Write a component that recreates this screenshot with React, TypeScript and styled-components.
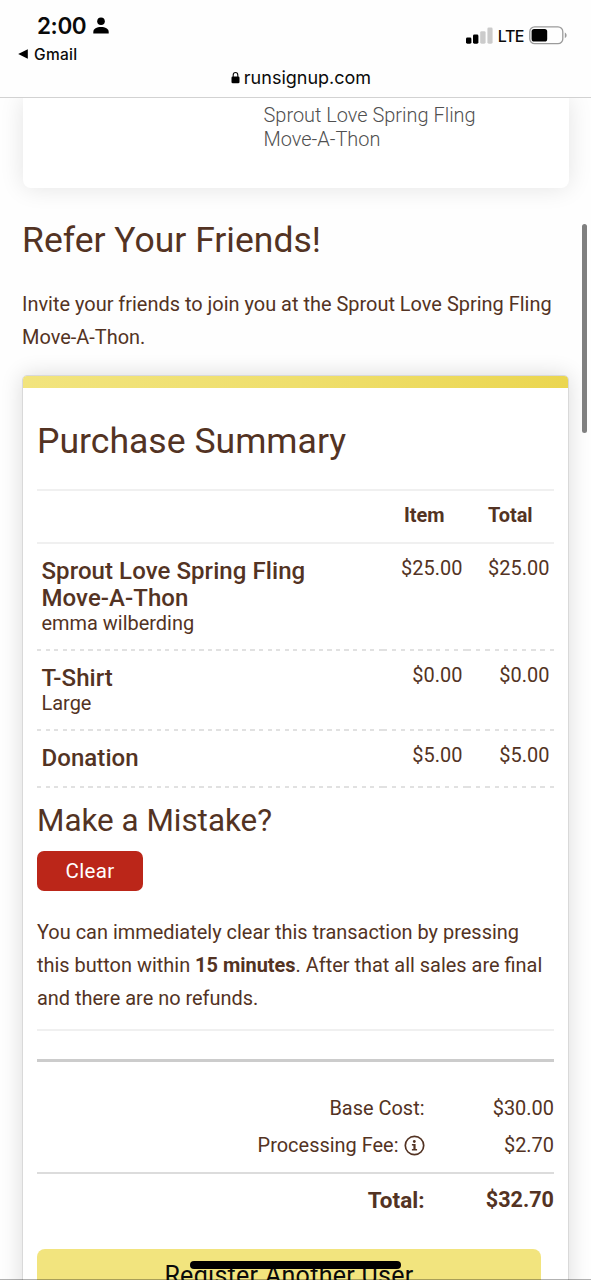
import React from "react";
import styled, { createGlobalStyle } from "styled-components";

const GlobalStyle = createGlobalStyle`
  * { box-sizing: border-box; }
  html, body { margin: 0; padding: 0; background: #fefefe; }
  h1, h2, h3, h4, p { margin: 0; font-weight: 400; }
`;

const Screen = styled.div`
  position: relative;
  width: 591px;
  height: 1280px;
  overflow: hidden;
  background: #fefefe;
  color: #533323;
  font-family: Roboto, sans-serif;
  font-size: 19.95px;
`;

const Header = styled.header`
  position: relative;
  z-index: 1;
  height: 98px;
  border-bottom: 1px solid #d2d2d2;
  background: #fefefe;
  color: #0a0a0a;
  font-family: Inter, sans-serif;
`;

const StatusBar = styled.div`
  display: flex;
  justify-content: space-between;
  height: 65px;
  padding: 12px 23px 0 18px;
`;

const Clock = styled.div`
  display: flex;
  align-items: center;
  gap: 7px;
  height: 27px;
  padding-left: 19px;
  font-size: 22.5px;
  font-weight: 600;
  letter-spacing: -0.4px;
`;

const BackLink = styled.div`
  display: flex;
  align-items: center;
  gap: 6px;
  height: 30px;
  font-size: 15.5px;
  font-weight: 500;
  letter-spacing: 0.3px;
`;

const Indicators = styled.div`
  display: flex;
  align-items: center;
  height: 47px;
  font-size: 16px;
  font-weight: 500;
`;

const Carrier = styled.span`
  margin: 0 5px 0 5px;
  letter-spacing: -0.5px;
`;

const AddressBar = styled.div`
  display: flex;
  align-items: center;
  justify-content: center;
  gap: 4px;
  height: 24px;
  padding-left: 11px;
  font-size: 18px;
`;

const Main = styled.main`
  padding: 0 22px;
`;

const EventCard = styled.section`
  height: 90px;
  margin: 0 0 0 1px;
  padding: 5px 0 0 240.5px;
  border-radius: 0 0 8px 8px;
  background: #fff;
  box-shadow: 0 0 24px rgba(0, 0, 0, 0.11);
  color: #505050;
  font-weight: 300;
  line-height: 24.4px;
`;

const Title = styled.h1`
  margin-top: 31px;
  font-size: 35.5px;
  line-height: 42px;
`;

const Invitation = styled.p`
  margin-top: 27px;
  line-height: 33px;
`;

const SummaryCard = styled.section`
  height: 940px;
  margin-top: 21px;
  border: 1px solid #d9d9d9;
  border-radius: 5px;
  background: #fff;
  box-shadow: 0 0 22px rgba(0, 0, 0, 0.14);
  overflow: hidden;
`;

const Accent = styled.div`
  height: 12px;
  background: linear-gradient(100deg, #f2e47e, #efdf6d 50%, #ebd650);
`;

const SummaryBody = styled.div`
  padding: 0 14px;
`;

const SummaryTitle = styled.h2`
  height: 101px;
  padding-top: 32px;
  font-size: 35.6px;
  line-height: 42px;
`;

const columns = "346px 84px 87px";

const TableHead = styled.div`
  display: grid;
  grid-template-columns: ${columns};
  height: 55px;
  padding-top: 11px;
  border-top: 2px solid #f0f0f0;
  border-bottom: 2px solid #f0f0f0;
  font-weight: 700;
  line-height: 26px;
`;

const HeadCell = styled.span<{ $indent: number }>`
  padding-left: ${(p) => p.$indent}px;
`;

const Row = styled.div<{ $height: number }>`
  display: grid;
  grid-template-columns: ${columns};
  height: ${(p) => p.$height}px;
`;

const Cell = styled.div<{ $period: number }>`
  padding: 14px 4.6px 0 4.5px;
  background: repeating-linear-gradient(
      90deg,
      #e1e1e1 0 4.3px,
      transparent 4.3px ${(p) => p.$period}px
    )
    left bottom / 100% 2px no-repeat;
`;

const Price = styled(Cell)`
  padding-top: 11px;
  line-height: 26px;
  text-align: right;
`;

const ItemName = styled.h4`
  font-size: 24px;
  font-weight: 500;
  line-height: 27px;
  letter-spacing: 0.07px;
`;

const ItemNote = styled.p`
  line-height: 22px;
`;

const MistakeTitle = styled.h3`
  padding-top: 14px;
  font-size: 31.4px;
  line-height: 38px;
`;

const ClearButton = styled.button`
  display: block;
  width: 106px;
  height: 40px;
  margin-top: 11px;
  padding: 0;
  border: 0;
  border-radius: 7px;
  background: #bb2619;
  color: #fff;
  font: 400 20.5px Roboto, sans-serif;
  letter-spacing: 0.3px;
`;

const Policy = styled.p`
  height: 113px;
  margin-top: 25px;
  line-height: 33px;
  white-space: nowrap;
`;

const Rule = styled.div<{ $weight: number; $color: string; $gap: number }>`
  height: ${(p) => p.$weight}px;
  margin-bottom: ${(p) => p.$gap}px;
  background: ${(p) => p.$color};
`;

const CostLine = styled.div<{ $height: number }>`
  display: grid;
  grid-template-columns: 387.5px 1fr;
  align-items: center;
  height: ${(p) => p.$height}px;
  text-align: right;
`;

const CostLabel = styled.span`
  display: flex;
  align-items: center;
  justify-content: flex-end;
  gap: 5px;
`;

const Costs = styled.div`
  height: 83px;
`;

const GrandTotal = styled(CostLine)`
  font-size: 22.5px;
  font-weight: 700;
`;

const GrandAmount = styled.span`
  margin-top: -2px;
  font-size: 21.6px;
`;

const RegisterButton = styled.button`
  display: block;
  width: 504px;
  height: 53px;
  margin-top: 30px;
  padding: 0;
  border: 0;
  border-radius: 8px;
  background: #f2e47e;
  color: #0a0a0a;
  font: 400 25px Roboto, sans-serif;
  letter-spacing: 0.3px;
`;

const ScrollThumb = styled.div`
  position: absolute;
  top: 224px;
  right: 4px;
  width: 5px;
  height: 209px;
  border-radius: 3px;
  background: #808080;
`;

const HomeIndicator = styled.div`
  position: absolute;
  top: 1261px;
  left: 190px;
  width: 211px;
  height: 8px;
  border-radius: 4px;
  background: #000;
`;

const BottomEdge = styled.div`
  position: absolute;
  bottom: 0;
  left: 0;
  width: 100%;
  height: 1px;
  background: rgba(0, 0, 0, 0.3);
`;

const items = [
  { name: <>Sprout Love Spring Fling<br />Move-A-Thon</>, note: "emma wilberding", price: "$25.00", height: 107 },
  { name: "T-Shirt", note: "Large", price: "$0.00", height: 80 },
  { name: "Donation", note: "", price: "$5.00", height: 57 },
];

const PersonIcon = () => (
  <svg width="16" height="17" viewBox="0 0 16 17">
    <circle cx="8" cy="4.3" r="3.8" />
    <path d="M.3 16.4V15c0-3 3.4-4.9 7.7-4.9s7.7 1.9 7.7 4.9v1.4z" />
  </svg>
);

const BackIcon = () => (
  <svg width="10" height="10" viewBox="0 0 10 10">
    <path d="M.2 5 9.8.2v9.6z" />
  </svg>
);

const SignalIcon = () => (
  <svg width="27" height="17" viewBox="0 0 27 17">
    <rect x="0" y="10.5" width="5.4" height="6.2" rx="1.4" />
    <rect x="7" y="7.6" width="5.4" height="9.1" rx="1.4" />
    <rect x="14.2" y="4.2" width="5.4" height="12.5" rx="1.4" fill="#cbcbcb" />
    <rect x="21.4" y=".5" width="5.2" height="16.2" rx="1.4" fill="#cbcbcb" />
  </svg>
);

const BatteryIcon = () => (
  <svg width="39" height="19" viewBox="0 0 39 19">
    <rect x=".8" y=".9" width="33" height="16.8" rx="4.8" fill="none" stroke="#9b9b9b" strokeWidth="1.3" />
    <rect x="2.6" y="3" width="15.6" height="12.6" rx="2.6" />
    <path d="M35.8 6.6c2.4 1 2.4 4.6 0 5.6z" fill="#9b9b9b" />
  </svg>
);

const LockIcon = () => (
  <svg width="9" height="13" viewBox="0 0 9 13">
    <rect x=".5" y="5.4" width="8" height="6.8" rx="1.3" />
    <path d="M2.2 6V3.9c0-3.2 4.6-3.2 4.6 0V6" fill="none" stroke="#0a0a0a" strokeWidth="1.1" />
  </svg>
);

const InfoIcon = () => (
  <svg width="21" height="21" viewBox="0 0 21 21" fill="#533323">
    <circle cx="10.5" cy="10.5" r="9.2" fill="none" stroke="#533323" strokeWidth="1.7" />
    <circle cx="10.3" cy="6.5" r="1.4" />
    <path d="M7.9 9h3.7v4.9h1.5v1.6H7.9v-1.6h1.5v-3.3H7.9z" />
  </svg>
);

export default function App() {
  return (
    <Screen>
      <GlobalStyle />
      <Header>
        <StatusBar>
          <div>
            <Clock>2:00 <PersonIcon /></Clock>
            <BackLink><BackIcon /> Gmail</BackLink>
          </div>
          <Indicators>
            <SignalIcon />
            <Carrier>LTE</Carrier>
            <BatteryIcon />
          </Indicators>
        </StatusBar>
        <AddressBar><LockIcon /> runsignup.com</AddressBar>
      </Header>
      <Main>
        <EventCard>Sprout Love Spring Fling<br />Move-A-Thon</EventCard>
        <Title>Refer Your Friends!</Title>
        <Invitation>
          Invite your friends to join you at the Sprout Love Spring Fling<br />Move-A-Thon.
        </Invitation>
        <SummaryCard>
          <Accent />
          <SummaryBody>
            <SummaryTitle>Purchase Summary</SummaryTitle>
            <TableHead>
              <span />
              <HeadCell $indent={21}>Item</HeadCell>
              <HeadCell $indent={21}>Total</HeadCell>
            </TableHead>
            {items.map((item) => (
              <Row key={item.price} $height={item.height}>
                <Cell $period={8.54}>
                  <ItemName>{item.name}</ItemName>
                  {item.note && <ItemNote>{item.note}</ItemNote>}
                </Cell>
                <Price $period={8.85}>{item.price}</Price>
                <Price $period={9.18}>{item.price}</Price>
              </Row>
            ))}
            <MistakeTitle>Make a Mistake?</MistakeTitle>
            <ClearButton>Clear</ClearButton>
            <Policy>
              You can immediately clear this transaction by pressing<br />
              this button within <b>15 minutes</b>. After that all sales are final<br />
              and there are no refunds.
            </Policy>
            <Rule $weight={2} $color="#f0f0f0" $gap={28} />
            <Rule $weight={3} $color="#cccccc" $gap={27} />
            <Costs>
              <CostLine $height={38}>
                <CostLabel>Base Cost:</CostLabel>
                <span>$30.00</span>
              </CostLine>
              <CostLine $height={36}>
                <CostLabel>Processing Fee: <InfoIcon /></CostLabel>
                <span>$2.70</span>
              </CostLine>
            </Costs>
            <Rule $weight={2} $color="#dcdcdc" $gap={7} />
            <GrandTotal $height={38}>
              <span>Total:</span>
              <GrandAmount>$32.70</GrandAmount>
            </GrandTotal>
            <RegisterButton>Register Another User</RegisterButton>
          </SummaryBody>
        </SummaryCard>
      </Main>
      <ScrollThumb />
      <HomeIndicator />
      <BottomEdge />
    </Screen>
  );
}
